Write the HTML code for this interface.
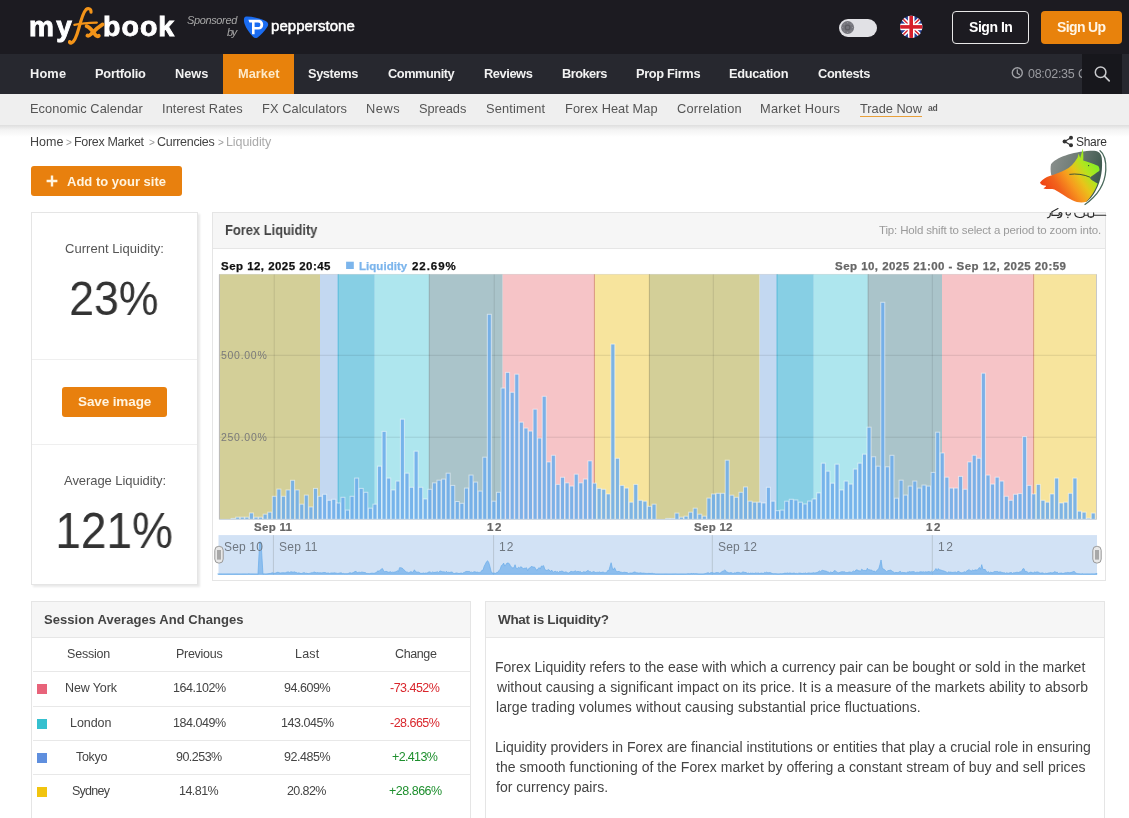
<!DOCTYPE html>
<html><head><meta charset="utf-8"><title>Forex Liquidity</title>
<style>
html,body{margin:0;padding:0;background:#fff;}
body{width:1129px;height:818px;overflow:hidden;position:relative;font-family:"Liberation Sans",sans-serif;}
body>div,.t{position:absolute;}
.t{white-space:nowrap;line-height:1;will-change:transform;}
svg{position:absolute;left:0;top:0;}
</style></head><body>
<div style="left:0px;top:0px;width:1129px;height:54px;background:#1c1b21"></div>
<div style="left:0px;top:54px;width:1129px;height:40px;background:#27282f"></div>
<div style="left:223px;top:54px;width:71px;height:40px;background:#e8820c"></div>
<div style="left:1082px;top:54px;width:40px;height:40px;background:#17171c"></div>
<div style="left:0px;top:94px;width:1129px;height:31px;background:#efefef"></div>
<div style="left:0px;top:125px;width:1129px;height:12px;background:linear-gradient(#dedede,#f3f3f3 40%,#fff)"></div>
<div style="left:952.4px;top:10.8px;width:76.2px;height:32.9px;border:1.5px solid #e8e8e8;border-radius:4px;box-sizing:border-box"></div>
<div style="left:1041px;top:10.8px;width:81px;height:32.9px;background:#e8820c;border-radius:4px"></div>
<div style="left:838.8px;top:18.8px;width:38.3px;height:18.3px;background:#e1e1e5;border-radius:9.2px"></div>
<div style="left:860.2px;top:115.6px;width:61.7px;height:1.5px;background:#e9a03a"></div>
<div style="left:31px;top:166.1px;width:151px;height:30.2px;background:#e8800e;border-radius:3px"></div>
<div style="left:31px;top:212px;width:167px;height:373px;background:#fff;border:1px solid #e5e5e5;box-shadow:2px 2px 2px rgba(0,0,0,0.09);box-sizing:border-box"></div>
<div style="left:32px;top:359px;width:165px;height:1px;background:#efefef"></div>
<div style="left:32px;top:444px;width:165px;height:1px;background:#efefef"></div>
<div style="left:62.3px;top:387.2px;width:104.8px;height:29.6px;background:#e8800e;border-radius:3px"></div>
<div style="left:212px;top:212.2px;width:893.6px;height:368.5px;background:#fff;border:1px solid #e5e5e5;box-sizing:border-box"></div>
<div style="left:213px;top:213.2px;width:891.6px;height:35.6px;background:#f6f6f6;border-bottom:1px solid #e6e6e6;box-sizing:border-box"></div>
<div style="left:31px;top:601px;width:440px;height:230px;background:#fff;border:1px solid #e5e5e5;box-sizing:border-box"></div>
<div style="left:32px;top:602px;width:438px;height:36px;background:#f6f6f6;border-bottom:1px solid #e6e6e6;box-sizing:border-box"></div>
<div style="left:32.7px;top:670.9px;width:437px;height:1px;background:#e8e8e8"></div>
<div style="left:32.7px;top:706px;width:437px;height:1px;background:#e8e8e8"></div>
<div style="left:32.7px;top:739.8px;width:437px;height:1px;background:#e8e8e8"></div>
<div style="left:32.7px;top:773.9px;width:437px;height:1px;background:#e8e8e8"></div>
<div style="left:36.8px;top:684px;width:10px;height:9.8px;background:#e8637a"></div>
<div style="left:36.8px;top:718.9px;width:10px;height:9.8px;background:#35c0cf"></div>
<div style="left:36.8px;top:752.9px;width:10px;height:9.8px;background:#5f8fde"></div>
<div style="left:36.8px;top:786.9px;width:10px;height:9.8px;background:#f1c40f"></div>
<div style="left:485.4px;top:601px;width:620px;height:230px;background:#fff;border:1px solid #e5e5e5;box-sizing:border-box"></div>
<div style="left:486.4px;top:602px;width:618px;height:36px;background:#f6f6f6;border-bottom:1px solid #e6e6e6;box-sizing:border-box"></div>
<svg width="1129" height="818" viewBox="0 0 1129 818" style="font-family:'Liberation Sans',sans-serif">
<rect x="219.4" y="274.4" width="100.6" height="245" fill="#d3cf98"/>
<rect x="320" y="274.4" width="18.2" height="245" fill="#c3d8f1"/>
<rect x="338.2" y="274.4" width="36.6" height="245" fill="#87cfe4"/>
<rect x="374.8" y="274.4" width="54.5" height="245" fill="#aee6ee"/>
<rect x="429.3" y="274.4" width="73.4" height="245" fill="#aac4ca"/>
<rect x="502.7" y="274.4" width="91.7" height="245" fill="#f6c4c7"/>
<rect x="594.4" y="274.4" width="55" height="245" fill="#f7e49d"/>
<rect x="649.4" y="274.4" width="110.2" height="245" fill="#d3cf98"/>
<rect x="759.6" y="274.4" width="17.5" height="245" fill="#c3d8f1"/>
<rect x="777.1" y="274.4" width="36.7" height="245" fill="#87cfe4"/>
<rect x="813.8" y="274.4" width="54.4" height="245" fill="#aee6ee"/>
<rect x="868.2" y="274.4" width="73.8" height="245" fill="#aac4ca"/>
<rect x="942" y="274.4" width="91.6" height="245" fill="#f6c4c7"/>
<rect x="1033.6" y="274.4" width="62.9" height="245" fill="#f7e49d"/>
<rect x="337.7" y="274.4" width="1" height="245" fill="#52b9d9"/>
<rect x="428.8" y="274.4" width="1" height="245" fill="#8fa9ad"/>
<rect x="593.9" y="274.4" width="1" height="245" fill="#d9967f"/>
<rect x="648.9" y="274.4" width="1" height="245" fill="#b8b07a"/>
<rect x="776.6" y="274.4" width="1" height="245" fill="#52b9d9"/>
<rect x="867.7" y="274.4" width="1" height="245" fill="#8fa9ad"/>
<rect x="1033.1" y="274.4" width="1" height="245" fill="#d9967f"/>
<rect x="219.4" y="354.8" width="877.1" height="1" fill="rgba(0,0,0,0.1)"/>
<rect x="219.4" y="436.7" width="877.1" height="1" fill="rgba(0,0,0,0.1)"/>
<rect x="273.7" y="274.4" width="1" height="245" fill="rgba(0,0,0,0.1)"/>
<rect x="493.7" y="274.4" width="1" height="245" fill="rgba(0,0,0,0.1)"/>
<rect x="712.8" y="274.4" width="1" height="245" fill="rgba(0,0,0,0.1)"/>
<rect x="931.8" y="274.4" width="1" height="245" fill="rgba(0,0,0,0.1)"/>
<rect x="218.9" y="274.4" width="1" height="245" fill="#b8b8b8"/>
<rect x="1096" y="274.4" width="1" height="245" fill="#c8c8c8"/>
<rect x="219.4" y="273.9" width="877.1" height="1" fill="rgba(0,0,0,0.08)"/>
<g fill="#70aeea" fill-opacity="0.9" stroke="#fff" stroke-opacity="0.55" stroke-width="1">
<rect x="231.14" y="518.4" width="3.98" height="1"/>
<rect x="235.71" y="517.2" width="3.98" height="2.2"/>
<rect x="240.29" y="517.2" width="3.98" height="2.2"/>
<rect x="244.86" y="517.2" width="3.98" height="2.2"/>
<rect x="249.44" y="513" width="3.98" height="6.4"/>
<rect x="254.01" y="517.2" width="3.98" height="2.2"/>
<rect x="258.59" y="517.2" width="3.98" height="2.2"/>
<rect x="263.16" y="514.2" width="3.98" height="5.2"/>
<rect x="267.74" y="512.2" width="3.98" height="7.2"/>
<rect x="272.31" y="496.3" width="3.98" height="23.1"/>
<rect x="276.89" y="489.1" width="3.98" height="30.3"/>
<rect x="281.46" y="496.3" width="3.98" height="23.1"/>
<rect x="286.04" y="490" width="3.98" height="29.4"/>
<rect x="290.61" y="480.3" width="3.98" height="39.1"/>
<rect x="295.19" y="490" width="3.98" height="29.4"/>
<rect x="299.76" y="504.2" width="3.98" height="15.2"/>
<rect x="304.34" y="495.1" width="3.98" height="24.3"/>
<rect x="308.91" y="507" width="3.98" height="12.4"/>
<rect x="313.49" y="488.4" width="3.98" height="31"/>
<rect x="318.06" y="496.3" width="3.98" height="23.1"/>
<rect x="322.64" y="494.3" width="3.98" height="25.1"/>
<rect x="327.21" y="500.3" width="3.98" height="19.1"/>
<rect x="331.79" y="499.3" width="3.98" height="20.1"/>
<rect x="336.36" y="503" width="3.98" height="16.4"/>
<rect x="340.94" y="497.3" width="3.98" height="22.1"/>
<rect x="345.51" y="510.1" width="3.98" height="9.3"/>
<rect x="350.09" y="496.3" width="3.98" height="23.1"/>
<rect x="354.66" y="478.1" width="3.98" height="41.3"/>
<rect x="359.24" y="488.4" width="3.98" height="31"/>
<rect x="363.81" y="492.3" width="3.98" height="27.1"/>
<rect x="368.39" y="508.2" width="3.98" height="11.2"/>
<rect x="372.96" y="504.2" width="3.98" height="15.2"/>
<rect x="377.54" y="466.2" width="3.98" height="53.2"/>
<rect x="382.11" y="431.4" width="3.98" height="88"/>
<rect x="386.69" y="478.1" width="3.98" height="41.3"/>
<rect x="391.26" y="490" width="3.98" height="29.4"/>
<rect x="395.84" y="481.1" width="3.98" height="38.3"/>
<rect x="400.41" y="419.2" width="3.98" height="100.2"/>
<rect x="404.99" y="473.2" width="3.98" height="46.2"/>
<rect x="409.56" y="487.3" width="3.98" height="32.1"/>
<rect x="414.14" y="451.2" width="3.98" height="68.2"/>
<rect x="418.71" y="487.3" width="3.98" height="32.1"/>
<rect x="423.29" y="499" width="3.98" height="20.4"/>
<rect x="427.86" y="489.3" width="3.98" height="30.1"/>
<rect x="432.44" y="482.9" width="3.98" height="36.5"/>
<rect x="437.01" y="480.2" width="3.98" height="39.2"/>
<rect x="441.59" y="479.1" width="3.98" height="40.3"/>
<rect x="446.16" y="473.2" width="3.98" height="46.2"/>
<rect x="450.74" y="485.4" width="3.98" height="34"/>
<rect x="455.31" y="501.5" width="3.98" height="17.9"/>
<rect x="459.89" y="503.3" width="3.98" height="16.1"/>
<rect x="464.46" y="488.1" width="3.98" height="31.3"/>
<rect x="469.04" y="475.1" width="3.98" height="44.3"/>
<rect x="473.61" y="482.1" width="3.98" height="37.3"/>
<rect x="478.19" y="491.1" width="3.98" height="28.3"/>
<rect x="482.76" y="457.2" width="3.98" height="62.2"/>
<rect x="487.34" y="314.3" width="3.98" height="205.1"/>
<rect x="491.91" y="501.2" width="3.98" height="18.2"/>
<rect x="496.49" y="492.3" width="3.98" height="27.1"/>
<rect x="501.06" y="388.1" width="3.98" height="131.3"/>
<rect x="505.64" y="372.4" width="3.98" height="147"/>
<rect x="510.21" y="392.3" width="3.98" height="127.1"/>
<rect x="514.79" y="374.2" width="3.98" height="145.2"/>
<rect x="519.36" y="422.2" width="3.98" height="97.2"/>
<rect x="523.94" y="428.1" width="3.98" height="91.3"/>
<rect x="528.51" y="431.1" width="3.98" height="88.3"/>
<rect x="533.09" y="409.2" width="3.98" height="110.2"/>
<rect x="537.66" y="438.1" width="3.98" height="81.3"/>
<rect x="542.24" y="396.3" width="3.98" height="123.1"/>
<rect x="546.81" y="462" width="3.98" height="57.4"/>
<rect x="551.39" y="455.3" width="3.98" height="64.1"/>
<rect x="555.96" y="484.4" width="3.98" height="35"/>
<rect x="560.54" y="477.3" width="3.98" height="42.1"/>
<rect x="565.11" y="482.9" width="3.98" height="36.5"/>
<rect x="569.69" y="486.1" width="3.98" height="33.3"/>
<rect x="574.26" y="474.2" width="3.98" height="45.2"/>
<rect x="578.84" y="482.9" width="3.98" height="36.5"/>
<rect x="583.41" y="479.1" width="3.98" height="40.3"/>
<rect x="587.99" y="460.9" width="3.98" height="58.5"/>
<rect x="592.56" y="483.2" width="3.98" height="36.2"/>
<rect x="597.14" y="488.4" width="3.98" height="31"/>
<rect x="601.71" y="489.3" width="3.98" height="30.1"/>
<rect x="606.29" y="494" width="3.98" height="25.4"/>
<rect x="610.86" y="344.1" width="3.98" height="175.3"/>
<rect x="615.44" y="458.3" width="3.98" height="61.1"/>
<rect x="620.01" y="485.4" width="3.98" height="34"/>
<rect x="624.59" y="488.1" width="3.98" height="31.3"/>
<rect x="629.16" y="502.2" width="3.98" height="17.2"/>
<rect x="633.74" y="484.4" width="3.98" height="35"/>
<rect x="638.31" y="500.3" width="3.98" height="19.1"/>
<rect x="642.89" y="501.2" width="3.98" height="18.2"/>
<rect x="647.46" y="506.3" width="3.98" height="13.1"/>
<rect x="652.04" y="504.2" width="3.98" height="15.2"/>
<rect x="665.76" y="518.4" width="3.98" height="1"/>
<rect x="670.34" y="518.4" width="3.98" height="1"/>
<rect x="674.91" y="513.1" width="3.98" height="6.3"/>
<rect x="679.49" y="517.2" width="3.98" height="2.2"/>
<rect x="684.06" y="516.2" width="3.98" height="3.2"/>
<rect x="688.64" y="512.2" width="3.98" height="7.2"/>
<rect x="693.21" y="508.2" width="3.98" height="11.2"/>
<rect x="697.79" y="514.2" width="3.98" height="5.2"/>
<rect x="702.36" y="516.2" width="3.98" height="3.2"/>
<rect x="706.94" y="498.1" width="3.98" height="21.3"/>
<rect x="711.51" y="494" width="3.98" height="25.4"/>
<rect x="716.09" y="493.3" width="3.98" height="26.1"/>
<rect x="720.66" y="493.3" width="3.98" height="26.1"/>
<rect x="725.24" y="460.2" width="3.98" height="59.2"/>
<rect x="729.81" y="495.2" width="3.98" height="24.2"/>
<rect x="734.39" y="497.3" width="3.98" height="22.1"/>
<rect x="738.96" y="492.3" width="3.98" height="27.1"/>
<rect x="743.54" y="487" width="3.98" height="32.4"/>
<rect x="748.11" y="501.2" width="3.98" height="18.2"/>
<rect x="752.69" y="502.2" width="3.98" height="17.2"/>
<rect x="757.26" y="502.2" width="3.98" height="17.2"/>
<rect x="761.84" y="503" width="3.98" height="16.4"/>
<rect x="766.41" y="487.3" width="3.98" height="32.1"/>
<rect x="770.99" y="501.2" width="3.98" height="18.2"/>
<rect x="775.56" y="510.7" width="3.98" height="8.7"/>
<rect x="780.14" y="510.1" width="3.98" height="9.3"/>
<rect x="784.71" y="501.2" width="3.98" height="18.2"/>
<rect x="789.29" y="499.3" width="3.98" height="20.1"/>
<rect x="793.86" y="500" width="3.98" height="19.4"/>
<rect x="798.44" y="502.2" width="3.98" height="17.2"/>
<rect x="803.01" y="504" width="3.98" height="15.4"/>
<rect x="807.59" y="501.1" width="3.98" height="18.3"/>
<rect x="812.16" y="499" width="3.98" height="20.4"/>
<rect x="816.74" y="493" width="3.98" height="26.4"/>
<rect x="821.31" y="463.2" width="3.98" height="56.2"/>
<rect x="825.89" y="471.2" width="3.98" height="48.2"/>
<rect x="830.46" y="483.2" width="3.98" height="36.2"/>
<rect x="835.04" y="464.2" width="3.98" height="55.2"/>
<rect x="839.61" y="490" width="3.98" height="29.4"/>
<rect x="844.19" y="481.1" width="3.98" height="38.3"/>
<rect x="848.76" y="484.1" width="3.98" height="35.3"/>
<rect x="853.34" y="469.1" width="3.98" height="50.3"/>
<rect x="857.91" y="463.2" width="3.98" height="56.2"/>
<rect x="862.49" y="454.2" width="3.98" height="65.2"/>
<rect x="867.06" y="427.2" width="3.98" height="92.2"/>
<rect x="871.64" y="456.8" width="3.98" height="62.6"/>
<rect x="876.21" y="466.2" width="3.98" height="53.2"/>
<rect x="880.79" y="302.3" width="3.98" height="217.1"/>
<rect x="885.36" y="466.8" width="3.98" height="52.6"/>
<rect x="889.94" y="455.3" width="3.98" height="64.1"/>
<rect x="894.51" y="498.2" width="3.98" height="21.2"/>
<rect x="899.09" y="480.2" width="3.98" height="39.2"/>
<rect x="903.66" y="495.1" width="3.98" height="24.3"/>
<rect x="908.24" y="486.1" width="3.98" height="33.3"/>
<rect x="912.81" y="481.1" width="3.98" height="38.3"/>
<rect x="917.39" y="488.1" width="3.98" height="31.3"/>
<rect x="921.96" y="485.1" width="3.98" height="34.3"/>
<rect x="926.54" y="486.1" width="3.98" height="33.3"/>
<rect x="931.11" y="472.4" width="3.98" height="47"/>
<rect x="935.69" y="432.2" width="3.98" height="87.2"/>
<rect x="940.26" y="453" width="3.98" height="66.4"/>
<rect x="944.84" y="477.2" width="3.98" height="42.2"/>
<rect x="949.41" y="488.1" width="3.98" height="31.3"/>
<rect x="953.99" y="488.1" width="3.98" height="31.3"/>
<rect x="958.56" y="476.4" width="3.98" height="43"/>
<rect x="963.14" y="489.3" width="3.98" height="30.1"/>
<rect x="967.71" y="462" width="3.98" height="57.4"/>
<rect x="972.29" y="455.3" width="3.98" height="64.1"/>
<rect x="976.86" y="458.3" width="3.98" height="61.1"/>
<rect x="981.44" y="373.2" width="3.98" height="146.2"/>
<rect x="986.01" y="475.1" width="3.98" height="44.3"/>
<rect x="990.59" y="484.1" width="3.98" height="35.3"/>
<rect x="995.16" y="477.2" width="3.98" height="42.2"/>
<rect x="999.74" y="481.1" width="3.98" height="38.3"/>
<rect x="1004.31" y="496.3" width="3.98" height="23.1"/>
<rect x="1008.89" y="500.3" width="3.98" height="19.1"/>
<rect x="1013.46" y="494.3" width="3.98" height="25.1"/>
<rect x="1018.04" y="493.6" width="3.98" height="25.8"/>
<rect x="1022.61" y="436.6" width="3.98" height="82.8"/>
<rect x="1027.19" y="485.4" width="3.98" height="34"/>
<rect x="1031.76" y="494" width="3.98" height="25.4"/>
<rect x="1036.34" y="484.4" width="3.98" height="35"/>
<rect x="1040.91" y="500.3" width="3.98" height="19.1"/>
<rect x="1045.49" y="502.2" width="3.98" height="17.2"/>
<rect x="1050.06" y="494" width="3.98" height="25.4"/>
<rect x="1054.64" y="478.1" width="3.98" height="41.3"/>
<rect x="1059.21" y="503" width="3.98" height="16.4"/>
<rect x="1063.79" y="502.2" width="3.98" height="17.2"/>
<rect x="1068.36" y="493.3" width="3.98" height="26.1"/>
<rect x="1072.94" y="478.1" width="3.98" height="41.3"/>
<rect x="1077.51" y="511.2" width="3.98" height="8.2"/>
<rect x="1082.09" y="512.2" width="3.98" height="7.2"/>
<rect x="1086.66" y="518.2" width="3.98" height="1.2"/>
<rect x="1091.24" y="513.1" width="3.98" height="6.3"/>
</g>
<rect x="219.4" y="518.9" width="877.1" height="1" fill="#c8d4e0"/>
<rect x="346.1" y="261.7" width="7.7" height="7.3" fill="#7cb5ec"/>
<rect x="218.5" y="535.1" width="878.5" height="39.7" fill="#d2e2f5"/>
<rect x="272.9" y="535.1" width="1" height="39.7" fill="#b9c6d3"/>
<rect x="493.1" y="535.1" width="1" height="39.7" fill="#b9c6d3"/>
<rect x="711.8" y="535.1" width="1" height="39.7" fill="#b9c6d3"/>
<rect x="931.8" y="535.1" width="1" height="39.7" fill="#b9c6d3"/>
<path d="M218.5 574.3 L217.68 574 L218.83 574 L219.97 574 L221.12 574 L222.26 574 L223.4 574 L224.55 574 L225.69 574 L226.83 574 L227.98 574 L229.12 574 L230.27 574 L231.41 574 L232.55 574 L233.7 574 L234.84 574 L235.98 574 L237.13 574 L238.27 574 L239.42 574 L240.56 574 L241.7 574 L242.85 574 L243.99 574 L245.13 574 L246.28 574 L247.42 574 L248.57 573.86 L249.71 573.88 L250.85 574 L252 573.97 L253.14 574 L254.28 574 L255.43 574 L256.57 574 L257.72 574 L257.97 574.3 L259.68 541.8 L261.07 542.3 L262.97 574.3 L263.43 573.96 L264.58 573.88 L265.72 574 L266.87 573.88 L268.01 573.82 L269.15 573.56 L270.3 573.49 L271.44 573.12 L272.58 572.78 L273.73 573.32 L274.87 573.26 L276.02 572.99 L277.16 572.3 L278.3 572.37 L279.45 572.8 L280.59 573.03 L281.73 572.78 L282.88 572.74 L284.02 572.8 L285.17 572.9 L286.31 572.36 L287.45 571.98 L288.6 571.95 L289.74 572.56 L290.88 571.72 L292.03 572 L293.17 572.23 L294.32 571.86 L295.46 572.36 L296.6 572.49 L297.75 573.19 L298.89 572.77 L300.03 573.3 L301.18 573.57 L302.32 573.2 L303.47 572.73 L304.61 572.7 L305.75 573.38 L306.9 573.22 L308.04 573.71 L309.18 573.48 L310.33 573.15 L311.47 572.75 L312.62 572.65 L313.76 572.25 L314.9 572.07 L316.05 572.93 L317.19 572.58 L318.33 572.78 L319.48 572.8 L320.62 572.78 L321.77 572.89 L322.91 572.64 L324.05 572.53 L325.2 572.53 L326.34 573.1 L327.48 573.04 L328.63 573 L329.77 573.53 L330.92 572.94 L332.06 572.97 L333.2 573.03 L334.35 572.8 L335.49 573.01 L336.63 573.22 L337.78 573.42 L338.92 573.26 L340.07 572.91 L341.21 572.84 L342.35 573.59 L343.5 573.4 L344.64 573.75 L345.78 573.69 L346.93 573.77 L348.07 573.67 L349.22 572.89 L350.36 572.78 L351.5 573.13 L352.65 572.76 L353.79 572.3 L354.93 571.57 L356.08 571.34 L357.22 572.85 L358.37 572.38 L359.51 572.25 L360.65 572.45 L361.8 572.06 L362.94 572.22 L364.08 572.51 L365.23 572.54 L366.37 573.36 L367.52 573.46 L368.66 573.56 L369.8 573.65 L370.95 573.28 L372.09 573.16 L373.23 573.3 L374.38 573.23 L375.52 572.78 L376.67 572.25 L377.81 570.79 L378.95 571.39 L380.1 570.16 L381.24 569.26 L382.38 568.49 L383.53 570.6 L384.67 571.94 L385.82 571.35 L386.96 571.57 L388.1 572.25 L389.25 572.09 L390.39 571.7 L391.53 572.36 L392.68 572.14 L393.82 572.27 L394.97 571.96 L396.11 571.77 L397.25 570.67 L398.4 571.61 L399.54 567.7 L400.68 567.69 L401.83 568.03 L402.97 568.69 L404.12 569.93 L405.26 571.25 L406.4 571.98 L407.55 572.16 L408.69 572.84 L409.83 572.18 L410.98 571.6 L412.12 572.34 L413.27 571.97 L414.41 569.8 L415.55 571.58 L416.7 572.1 L417.84 572.16 L418.98 572.18 L420.13 573.17 L421.27 573.35 L422.42 573.29 L423.56 572.95 L424.7 573.36 L425.85 572.96 L426.99 573.26 L428.13 572.31 L429.28 571.87 L430.42 572.15 L431.57 572.79 L432.71 571.89 L433.85 572.52 L435 572.32 L436.14 572.25 L437.28 571.71 L438.43 572.64 L439.57 571.3 L440.72 571.01 L441.86 571.64 L443 571.88 L444.15 571.76 L445.29 572.5 L446.43 571.25 L447.58 572.53 L448.72 572.21 L449.87 572.5 L451.01 572.06 L452.15 572.06 L453.3 573.16 L454.44 573.48 L455.58 573.12 L456.73 572.9 L457.87 573.27 L459.02 573.59 L460.16 573.24 L461.3 573.08 L462.45 573.41 L463.59 572.63 L464.73 572.23 L465.88 571.48 L467.02 571.42 L468.17 571.49 L469.31 571.38 L470.45 572.24 L471.6 572.13 L472.74 572.58 L473.88 571.84 L475.03 571.78 L476.17 572.3 L477.32 572.09 L478.46 572.43 L479.6 572.4 L480.75 572.19 L481.89 570.34 L483.03 570.19 L484.18 566.29 L485.32 564.18 L486.47 561.84 L487.61 560.76 L488.75 562.56 L489.9 566.43 L491.04 571.26 L492.18 573.1 L493.33 573.07 L494.47 573.11 L495.62 573.36 L496.76 572.51 L497.9 572.3 L499.05 570.4 L500.19 569.22 L501.33 565.63 L502.48 565.06 L503.62 563.1 L504.77 566.15 L505.91 564.6 L507.05 563 L508.2 563.07 L509.34 563.68 L510.48 565.91 L511.63 567.3 L512.77 567.97 L513.92 567.72 L515.06 564.72 L516.2 568.25 L517.35 568.76 L518.49 567.19 L519.63 567.88 L520.78 566.84 L521.92 567.22 L523.07 568.88 L524.21 568.27 L525.35 568.28 L526.5 567.72 L527.64 570.72 L528.78 568.47 L529.93 568.03 L531.07 566.53 L532.22 566.71 L533.36 567.03 L534.5 566.99 L535.65 568.71 L536.79 570.36 L537.93 568.93 L539.08 567.62 L540.22 569.02 L541.37 566.04 L542.51 566.18 L543.65 565.64 L544.8 569.37 L545.94 570.25 L547.08 570.51 L548.23 569.57 L549.37 570.06 L550.52 571.54 L551.66 570.07 L552.8 571.9 L553.95 572.16 L555.09 571 L556.23 571.99 L557.38 571.59 L558.52 572.64 L559.67 571.3 L560.81 571.52 L561.95 570.98 L563.1 571.68 L564.24 572.31 L565.38 571.89 L566.53 572.1 L567.67 572.82 L568.82 573.04 L569.96 572.1 L571.1 571.36 L572.25 571.7 L573.39 571.74 L574.53 571.32 L575.68 570.88 L576.82 572 L577.97 571.34 L579.11 571.89 L580.25 571.51 L581.4 572.53 L582.54 572.41 L583.68 571.64 L584.83 572.06 L585.97 571.96 L587.12 570.88 L588.26 570.44 L589.4 571.74 L590.55 571.66 L591.69 572.53 L592.83 571.91 L593.98 571.57 L595.12 572.53 L596.27 572.44 L597.41 572.25 L598.55 572.35 L599.7 571.91 L600.84 572.61 L601.98 572.31 L603.13 572.02 L604.27 572.65 L605.42 572.68 L606.56 572.62 L607.7 570.5 L608.85 570.57 L609.99 566.49 L611.13 562.73 L612.28 567.73 L613.42 569.99 L614.57 567.74 L615.71 570.27 L616.85 571.9 L618 571.53 L619.14 571.45 L620.28 572.06 L621.43 572.23 L622.57 572.62 L623.72 572.37 L624.86 572.23 L626 572.58 L627.15 572.54 L628.29 573.45 L629.43 573.16 L630.58 572.95 L631.72 573.05 L632.87 572.8 L634.01 571.99 L635.15 572.07 L636.3 572.68 L637.44 572.86 L638.58 573.04 L639.73 572.95 L640.87 572.84 L642.02 573.25 L643.16 573.1 L644.3 573.21 L645.45 573.37 L646.59 573.44 L647.73 573.44 L648.88 573.37 L650.02 573.49 L651.17 573.41 L652.31 573.3 L653.45 573.63 L654.6 573.69 L655.74 574 L656.88 574 L658.03 574 L659.17 574 L660.32 574 L661.46 574 L662.6 574 L663.75 574 L664.89 574 L666.03 574 L667.18 574 L668.32 574 L669.47 574 L670.61 574 L671.75 574 L672.9 574 L674.04 574 L675.18 573.88 L676.33 573.95 L677.47 573.99 L678.62 574 L679.76 574 L680.9 574 L682.05 574 L683.19 574 L684.33 574 L685.48 574 L686.62 573.9 L687.77 573.8 L688.91 573.82 L690.05 573.92 L691.2 573.56 L692.34 573.74 L693.48 573.56 L694.63 573.73 L695.77 573.63 L696.92 573.8 L698.06 573.96 L699.2 574 L700.35 574 L701.49 574 L702.63 574 L703.78 573.9 L704.92 573.74 L706.07 573.44 L707.21 572.89 L708.35 572.74 L709.5 573.43 L710.64 572.79 L711.78 572.62 L712.93 572.85 L714.07 573.34 L715.22 572.96 L716.36 572.58 L717.5 572.6 L718.65 572.73 L719.79 573.28 L720.93 572.58 L722.08 571.49 L723.22 571.2 L724.37 570.17 L725.51 570.39 L726.65 572.22 L727.8 572.27 L728.94 573.04 L730.08 572.7 L731.23 572.59 L732.37 573.17 L733.52 573.34 L734.66 572.84 L735.8 573 L736.95 572.37 L738.09 572.38 L739.23 572.51 L740.38 572.93 L741.52 573.01 L742.67 571.85 L743.81 572.16 L744.95 572.49 L746.1 572.56 L747.24 573.42 L748.38 573.1 L749.53 573.6 L750.67 573.09 L751.82 573.32 L752.96 573.16 L754.1 573.62 L755.25 572.93 L756.39 573.17 L757.53 573.16 L758.68 573.05 L759.82 573.63 L760.97 573.04 L762.11 573.22 L763.25 573.5 L764.4 572.45 L765.54 572.69 L766.68 572.18 L767.83 572.81 L768.97 572.74 L770.12 572.59 L771.26 573.1 L772.4 573.53 L773.55 573.73 L774.69 573.63 L775.83 573.73 L776.98 573.88 L778.12 573.93 L779.27 573.9 L780.41 573.69 L781.55 573.85 L782.7 573.67 L783.84 573.49 L784.98 573.1 L786.13 573.36 L787.27 572.93 L788.42 573.32 L789.56 572.97 L790.7 573.12 L791.85 573.42 L792.99 573.28 L794.13 573.02 L795.28 573.6 L796.42 573.42 L797.57 573.64 L798.71 573.16 L799.85 573.12 L801 573.29 L802.14 573.59 L803.28 573.28 L804.43 573.36 L805.57 572.96 L806.72 573.58 L807.86 573.09 L809 572.9 L810.15 573.21 L811.29 573.12 L812.43 572.95 L813.58 572.66 L814.72 573.03 L815.87 572.81 L817.01 572.56 L818.15 572 L819.3 570.93 L820.44 571.76 L821.58 570.59 L822.73 570.25 L823.87 570.7 L825.02 571 L826.16 571.12 L827.3 571.81 L828.45 572.09 L829.59 572.78 L830.73 571.91 L831.88 572.57 L833.02 572.49 L834.17 570.74 L835.31 570.66 L836.45 571.95 L837.6 572.45 L838.74 572.86 L839.88 572.36 L841.03 571.92 L842.17 571.71 L843.32 571.87 L844.46 571.77 L845.6 572.45 L846.75 572.55 L847.89 572.5 L849.03 571.97 L850.18 572.05 L851.32 572.43 L852.47 571.65 L853.61 570.98 L854.75 571.79 L855.9 570 L857.04 569.85 L858.18 570.59 L859.33 570.7 L860.47 571.41 L861.62 569.21 L862.76 570 L863.9 570.66 L865.05 570.15 L866.19 571.19 L867.33 568.21 L868.48 569.73 L869.62 569.79 L870.77 570.13 L871.91 570.17 L873.05 571.55 L874.2 570.85 L875.34 572.27 L876.48 570.79 L877.63 569.73 L878.77 568.83 L879.92 564.66 L881.06 559.97 L882.2 567.57 L883.35 569.26 L884.49 569.58 L885.63 570.83 L886.78 571.69 L887.92 570.6 L889.07 570.58 L890.21 570.07 L891.35 570.51 L892.5 571.46 L893.64 572.09 L894.78 572.9 L895.93 572.32 L897.07 572.66 L898.22 572.52 L899.36 571.71 L900.5 571.4 L901.65 572.93 L902.79 572.35 L903.93 572.7 L905.08 572.55 L906.22 573.2 L907.37 571.97 L908.51 572.1 L909.65 571.62 L910.8 571.96 L911.94 571.7 L913.08 571.77 L914.23 571.6 L915.37 572.81 L916.52 572.3 L917.66 572.23 L918.8 572.39 L919.95 571.84 L921.09 571.83 L922.23 572.04 L923.38 571.76 L924.52 572.16 L925.67 571.7 L926.81 572.1 L927.95 571.81 L929.1 571.56 L930.24 572.26 L931.38 571.2 L932.53 572.15 L933.67 571.45 L934.82 570.21 L935.96 568.54 L937.1 570.93 L938.25 568.55 L939.39 569.85 L940.53 569.92 L941.68 570.36 L942.82 570.76 L943.97 571.03 L945.11 571.51 L946.25 571.97 L947.4 572.96 L948.54 571.81 L949.68 572.23 L950.83 572.08 L951.97 572.44 L953.12 572.39 L954.26 572.23 L955.4 572.02 L956.55 572.84 L957.69 571.48 L958.83 571.46 L959.98 572.39 L961.12 572.85 L962.27 572.68 L963.41 572.31 L964.55 571.72 L965.7 572.3 L966.84 570.74 L967.98 570.51 L969.13 569.49 L970.27 570.71 L971.42 570.93 L972.56 570.07 L973.7 570.6 L974.85 570.05 L975.99 569.86 L977.13 570.27 L978.28 568.96 L979.42 567.46 L980.57 569.32 L981.71 564.65 L982.85 569.1 L984 569.72 L985.14 569.37 L986.28 571.38 L987.43 572.18 L988.57 571.81 L989.72 572.92 L990.86 571.97 L992 572.85 L993.15 572.41 L994.29 571.57 L995.43 571.51 L996.58 571.49 L997.72 571.58 L998.87 572.35 L1000.01 571.77 L1001.15 572.22 L1002.3 572.53 L1003.44 572.74 L1004.58 572.78 L1005.73 573.38 L1006.87 572.66 L1008.02 573.39 L1009.16 573.04 L1010.3 572.62 L1011.45 572.54 L1012.59 573.42 L1013.73 572.64 L1014.88 572.85 L1016.02 572.41 L1017.17 572.22 L1018.31 572.6 L1019.45 572.01 L1020.6 571.65 L1021.74 571.15 L1022.88 568.84 L1024.03 568.65 L1025.17 571.61 L1026.32 571.38 L1027.46 572.06 L1028.6 572.94 L1029.75 572.5 L1030.89 572.09 L1032.03 572.62 L1033.18 573.12 L1034.32 572.06 L1035.47 572.35 L1036.61 571.99 L1037.75 571.9 L1038.9 572.44 L1040.04 573.22 L1041.18 573.04 L1042.33 572.85 L1043.47 573.23 L1044.62 573.64 L1045.76 573.16 L1046.9 573.6 L1048.05 573.04 L1049.19 572.97 L1050.33 572.62 L1051.48 572.82 L1052.62 572.87 L1053.77 572.35 L1054.91 571.57 L1056.05 572.51 L1057.2 572.13 L1058.34 573.48 L1059.48 573.22 L1060.63 573.12 L1061.77 573.04 L1062.92 573.59 L1064.06 573.16 L1065.2 572.76 L1066.35 572.8 L1067.49 572.44 L1068.63 572.58 L1069.78 572.81 L1070.92 572.5 L1072.07 572.26 L1073.21 571.57 L1074.35 571.58 L1075.5 572.73 L1076.64 573.43 L1077.78 573.76 L1078.93 573.85 L1080.07 573.92 L1081.22 574 L1082.36 573.82 L1083.5 574 L1084.65 573.99 L1085.79 574 L1086.93 574 L1088.08 574 L1089.22 574 L1090.37 574 L1091.51 573.88 L1092.65 573.92 L1093.8 574 L1094.94 573.96 L1097 573.5 L1097 574.3 Z" fill="#7cb5ec" fill-opacity="0.8" stroke="#68acea" stroke-width="0.7"/>
<rect x="214.8" y="546.3" width="8.4" height="16.8" rx="4" fill="#e8e8e8" stroke="#999" stroke-width="1"/>
<rect x="217" y="550" width="4" height="9.6" fill="#a8a8a8"/>
<rect x="1092.8" y="546.3" width="8.4" height="16.8" rx="4" fill="#e8e8e8" stroke="#999" stroke-width="1"/>
<rect x="1095" y="550" width="4" height="9.6" fill="#a8a8a8"/>
</svg>
<span class="t" style="left:29.06px;top:13px;font-size:28px;color:#fff;font-weight:bold;letter-spacing:2.24px;-webkit-text-stroke:0.9px #fff;">my</span>
<span class="t" style="left:102.93px;top:12px;font-size:28.5px;color:#fff;font-weight:bold;letter-spacing:1.03px;-webkit-text-stroke:0.9px #fff;">book</span>
<span class="t" style="left:187.09px;top:15px;font-size:11px;color:#a6a6a6;font-style:italic;letter-spacing:-0.37px;">Sponsored</span>
<span class="t" style="left:227.15px;top:27px;font-size:11px;color:#a6a6a6;font-style:italic;letter-spacing:-1.31px;">by</span>
<span class="t" style="left:271.04px;top:18px;font-size:15px;color:#fff;letter-spacing:0.04px;-webkit-text-stroke:0.5px #fff;">pepperstone</span>
<span class="t" style="left:969.18px;top:20px;font-size:14px;color:#fff;font-weight:bold;letter-spacing:-0.46px;">Sign In</span>
<span class="t" style="left:1056.78px;top:20px;font-size:14px;color:#fff5e6;font-weight:bold;letter-spacing:-0.62px;">Sign Up</span>
<span class="t" style="left:29.84px;top:68px;font-size:12.8px;color:#f2f2f2;font-weight:bold;letter-spacing:0.15px;">Home</span>
<span class="t" style="left:94.84px;top:68px;font-size:12.8px;color:#f2f2f2;font-weight:bold;letter-spacing:-0.21px;">Portfolio</span>
<span class="t" style="left:175.14px;top:68px;font-size:12.8px;color:#f2f2f2;font-weight:bold;letter-spacing:-0.02px;">News</span>
<span class="t" style="left:237.54px;top:68px;font-size:12.8px;color:#fde9c9;font-weight:bold;letter-spacing:0.03px;">Market</span>
<span class="t" style="left:308.22px;top:68px;font-size:12.8px;color:#f2f2f2;font-weight:bold;letter-spacing:-0.39px;">Systems</span>
<span class="t" style="left:388.38px;top:68px;font-size:12.8px;color:#f2f2f2;font-weight:bold;letter-spacing:-0.46px;">Community</span>
<span class="t" style="left:484.04px;top:68px;font-size:12.8px;color:#f2f2f2;font-weight:bold;letter-spacing:-0.41px;">Reviews</span>
<span class="t" style="left:561.94px;top:68px;font-size:12.8px;color:#f2f2f2;font-weight:bold;letter-spacing:-0.52px;">Brokers</span>
<span class="t" style="left:636.04px;top:68px;font-size:12.8px;color:#f2f2f2;font-weight:bold;letter-spacing:-0.34px;">Prop Firms</span>
<span class="t" style="left:729.14px;top:68px;font-size:12.8px;color:#f2f2f2;font-weight:bold;letter-spacing:-0.3px;">Education</span>
<span class="t" style="left:817.68px;top:68px;font-size:12.8px;color:#f2f2f2;font-weight:bold;letter-spacing:-0.35px;">Contests</span>
<span class="t" style="left:1028.11px;top:68px;font-size:12.5px;color:#9a9ba0;letter-spacing:-0.28px;">08:02:35</span>
<span class="t" style="left:1077.58px;top:68px;font-size:12.5px;color:#9a9ba0;width:3.6px;overflow:hidden;display:block;">G</span>
<span class="t" style="left:29.76px;top:103px;font-size:12.8px;color:#555;letter-spacing:0.07px;">Economic Calendar</span>
<span class="t" style="left:161.82px;top:103px;font-size:12.8px;color:#555;letter-spacing:0.07px;">Interest Rates</span>
<span class="t" style="left:261.96px;top:103px;font-size:12.8px;color:#555;letter-spacing:0.08px;">FX Calculators</span>
<span class="t" style="left:366.36px;top:103px;font-size:12.8px;color:#555;letter-spacing:0.53px;">News</span>
<span class="t" style="left:419.12px;top:103px;font-size:12.8px;color:#555;letter-spacing:-0.06px;">Spreads</span>
<span class="t" style="left:486.42px;top:103px;font-size:12.8px;color:#555;letter-spacing:0.19px;">Sentiment</span>
<span class="t" style="left:564.96px;top:103px;font-size:12.8px;color:#555;letter-spacing:0.06px;">Forex Heat Map</span>
<span class="t" style="left:676.96px;top:103px;font-size:12.8px;color:#555;letter-spacing:0.2px;">Correlation</span>
<span class="t" style="left:759.86px;top:103px;font-size:12.8px;color:#555;letter-spacing:0.29px;">Market Hours</span>
<span class="t" style="left:859.92px;top:103px;font-size:12.8px;color:#555;letter-spacing:-0.02px;">Trade Now</span>
<span class="t" style="left:927.75px;top:104px;font-size:8.5px;color:#555;font-weight:bold;letter-spacing:-0.11px;">ad</span>
<span class="t" style="left:29.78px;top:136px;font-size:12.5px;color:#444;letter-spacing:0.01px;">Home</span>
<span class="t" style="left:66.12px;top:138px;font-size:10px;color:#999;letter-spacing:-0.02px;">&gt;</span>
<span class="t" style="left:74.48px;top:136px;font-size:12.5px;color:#444;letter-spacing:-0.33px;">Forex Market</span>
<span class="t" style="left:148.52px;top:138px;font-size:10px;color:#999;letter-spacing:-0.02px;">&gt;</span>
<span class="t" style="left:156.97px;top:136px;font-size:12.5px;color:#444;letter-spacing:-0.3px;">Currencies</span>
<span class="t" style="left:218.12px;top:138px;font-size:10px;color:#999;letter-spacing:-0.02px;">&gt;</span>
<span class="t" style="left:225.98px;top:136px;font-size:12.5px;color:#aaa;letter-spacing:-0.08px;">Liquidity</span>
<span class="t" style="left:67.47px;top:175px;font-size:13px;color:#fff4e0;font-weight:bold;">Add to your site</span>
<span class="t" style="left:1075.86px;top:136px;font-size:12px;color:#333;letter-spacing:-0.29px;">Share</span>
<span class="t" style="left:65.05px;top:242px;font-size:13px;color:#555;letter-spacing:0.04px;">Current Liquidity:</span>
<span class="t" style="left:69.05px;top:274px;font-size:49px;color:#333;transform:scaleX(0.91);transform-origin:2.45px 0;">23%</span>
<span class="t" style="left:77.5px;top:395px;font-size:13.5px;color:#fff4e0;font-weight:bold;letter-spacing:-0.11px;">Save image</span>
<span class="t" style="left:64.08px;top:474px;font-size:13px;color:#555;letter-spacing:-0.06px;">Average Liquidity:</span>
<span class="t" style="left:54.81px;top:506px;font-size:49.5px;color:#333;transform:scaleX(0.93);transform-origin:3.79px 0;">121%</span>
<span class="t" style="left:224.86px;top:223px;font-size:14px;color:#444;font-weight:bold;transform:scaleX(0.92);transform-origin:0.94px 0;">Forex Liquidity</span>
<span class="t" style="left:878.75px;top:225px;font-size:11.5px;color:#9a9a9a;letter-spacing:-0.16px;">Tip: Hold shift to select a period to zoom into.</span>
<span class="t" style="left:220.66px;top:261px;font-size:11.5px;color:#111;font-weight:bold;letter-spacing:0.46px;-webkit-text-stroke:0.25px #111;">Sep 12, 2025 20:45</span>
<span class="t" style="left:359.03px;top:261px;font-size:11.5px;color:#7cb5ec;font-weight:bold;letter-spacing:0.04px;-webkit-text-stroke:0.25px #7cb5ec;">Liquidity</span>
<span class="t" style="left:411.6px;top:261px;font-size:11.5px;color:#111;font-weight:bold;letter-spacing:0.94px;-webkit-text-stroke:0.25px #111;">22.69%</span>
<span class="t" style="left:834.86px;top:261px;font-size:11.5px;color:#666;font-weight:bold;letter-spacing:0.46px;-webkit-text-stroke:0.25px #666;">Sep 10, 2025 21:00 - Sep 12, 2025 20:59</span>
<span class="t" style="left:221.47px;top:350px;font-size:10.5px;color:#7a7a7a;letter-spacing:0.71px;">500.00%</span>
<span class="t" style="left:221.38px;top:432px;font-size:10.5px;color:#7a7a7a;letter-spacing:0.72px;">250.00%</span>
<span class="t" style="left:254.26px;top:522px;font-size:11.5px;color:#666;font-weight:bold;letter-spacing:0.28px;-webkit-text-stroke:0.2px #666;">Sep 11</span>
<span class="t" style="left:487.18px;top:522px;font-size:11.5px;color:#666;font-weight:bold;letter-spacing:1.49px;-webkit-text-stroke:0.2px #666;">12</span>
<span class="t" style="left:693.66px;top:522px;font-size:11.5px;color:#666;font-weight:bold;letter-spacing:0.28px;-webkit-text-stroke:0.2px #666;">Sep 12</span>
<span class="t" style="left:925.78px;top:522px;font-size:11.5px;color:#666;font-weight:bold;letter-spacing:1.49px;-webkit-text-stroke:0.2px #666;">12</span>
<span class="t" style="left:223.66px;top:541px;font-size:12px;color:#6f7780;letter-spacing:0.17px;">Sep 10</span>
<span class="t" style="left:278.86px;top:541px;font-size:12px;color:#6f7780;letter-spacing:0.24px;">Sep 11</span>
<span class="t" style="left:498.68px;top:541px;font-size:12px;color:#6f7780;letter-spacing:1.07px;">12</span>
<span class="t" style="left:717.86px;top:541px;font-size:12px;color:#6f7780;letter-spacing:0.2px;">Sep 12</span>
<span class="t" style="left:937.88px;top:541px;font-size:12px;color:#6f7780;letter-spacing:1.47px;">12</span>
<span class="t" style="left:43.51px;top:613px;font-size:13px;color:#444;font-weight:bold;letter-spacing:0.06px;">Session Averages And Changes</span>
<span class="t" style="left:67.13px;top:648px;font-size:12.5px;color:#444;letter-spacing:-0.2px;">Session</span>
<span class="t" style="left:175.88px;top:648px;font-size:12.5px;color:#444;letter-spacing:-0.28px;">Previous</span>
<span class="t" style="left:294.78px;top:648px;font-size:12.5px;color:#444;letter-spacing:0.23px;">Last</span>
<span class="t" style="left:394.68px;top:648px;font-size:12.5px;color:#444;letter-spacing:-0.38px;">Change</span>
<span class="t" style="left:64.58px;top:682px;font-size:12.5px;color:#444;letter-spacing:-0.12px;">New York</span>
<span class="t" style="left:172.64px;top:682px;font-size:12.5px;color:#444;letter-spacing:-0.44px;">164.102%</span>
<span class="t" style="left:284.21px;top:682px;font-size:12.5px;color:#444;letter-spacing:-0.44px;">94.609%</span>
<span class="t" style="left:390.25px;top:682px;font-size:12.5px;color:#d9262c;letter-spacing:-0.52px;">-73.452%</span>
<span class="t" style="left:69.88px;top:717px;font-size:12.5px;color:#444;letter-spacing:-0.06px;">London</span>
<span class="t" style="left:172.64px;top:717px;font-size:12.5px;color:#444;letter-spacing:-0.44px;">184.049%</span>
<span class="t" style="left:281.04px;top:717px;font-size:12.5px;color:#444;letter-spacing:-0.45px;">143.045%</span>
<span class="t" style="left:390.25px;top:717px;font-size:12.5px;color:#d9262c;letter-spacing:-0.52px;">-28.665%</span>
<span class="t" style="left:75.53px;top:751px;font-size:12.5px;color:#444;letter-spacing:-0.31px;">Tokyo</span>
<span class="t" style="left:176.31px;top:751px;font-size:12.5px;color:#444;letter-spacing:-0.52px;">90.253%</span>
<span class="t" style="left:284.21px;top:751px;font-size:12.5px;color:#444;letter-spacing:-0.44px;">92.485%</span>
<span class="t" style="left:392.19px;top:751px;font-size:12.5px;color:#1e8f2e;letter-spacing:-0.64px;">+2.413%</span>
<span class="t" style="left:71.63px;top:785px;font-size:12.5px;color:#444;letter-spacing:-0.74px;">Sydney</span>
<span class="t" style="left:179.14px;top:785px;font-size:12.5px;color:#444;letter-spacing:-0.54px;">14.81%</span>
<span class="t" style="left:287.48px;top:785px;font-size:12.5px;color:#444;letter-spacing:-0.61px;">20.82%</span>
<span class="t" style="left:388.99px;top:785px;font-size:12.5px;color:#1e8f2e;letter-spacing:-0.5px;">+28.866%</span>
<span class="t" style="left:498.48px;top:613px;font-size:13.5px;color:#444;font-weight:bold;letter-spacing:-0.31px;">What is Liquidity?</span>
<span class="t" style="left:495.46px;top:660px;font-size:14px;color:#444;letter-spacing:-0.02px;">Forex Liquidity refers to the ease with which a currency pair can be bought or sold in the market</span>
<span class="t" style="left:496.62px;top:680px;font-size:14px;color:#444;letter-spacing:0.06px;">without causing a significant impact on its price. It is a measure of the markets ability to absorb</span>
<span class="t" style="left:495.66px;top:700px;font-size:14px;color:#444;letter-spacing:0.1px;">large trading volumes without causing substantial price fluctuations.</span>
<span class="t" style="left:495.46px;top:740px;font-size:14px;color:#444;letter-spacing:0.02px;">Liquidity providers in Forex are financial institutions or entities that play a crucial role in ensuring</span>
<span class="t" style="left:496.38px;top:760px;font-size:14px;color:#444;letter-spacing:0.04px;">the smooth functioning of the Forex market by offering a constant stream of buy and sell prices</span>
<span class="t" style="left:496.4px;top:780px;font-size:14px;color:#444;">for currency pairs.</span>
<svg width="1129" height="818" viewBox="0 0 1129 818" style="pointer-events:none">
<!-- myfxbook f x -->
<g fill="none" stroke="#f39419" stroke-linecap="round">
<path d="M91 12.2 C91.2 9 88.4 7.6 86 9.6 C83.4 12 81 20 78.6 29 C76.6 36.4 74.6 41.8 71.4 43 C70 43.4 69.2 42.6 69.6 41.6" stroke-width="3.2"/>
<path d="M74.4 24.8 C80 23.6 89 22.8 96.8 22.6" stroke-width="2.3"/>
<path d="M86.6 26.2 C89.6 27 92.6 31 95 34.4 C96.2 36 97.6 36.8 98.8 35.8" stroke-width="3.8"/>
<path d="M102.6 24.4 C99 26.6 94.2 30.8 91.2 34 C89.8 35.4 88.4 36.4 87.4 35.6" stroke-width="3.8"/>
</g>
<!-- pepperstone icon -->
<path d="M246.3 16.6 C252 16.4 259.5 18.2 265.6 21 C268.4 22.3 268.8 24.6 267.4 26.8 C264.6 31 260.6 35.4 257.6 37.4 C256 38.4 254.4 38.2 253.2 37 C249.6 33.4 246.2 28.6 244.6 24 C243.4 20.2 243.6 16.8 246.3 16.6 Z" fill="#1a6cf1"/>
<path d="M248.4 19.8 H258.4 C261.6 19.8 263.2 22 263.2 24.8 C263.2 27.8 261.4 29.6 258.4 29.6 H254.6 V34.2 H252 V22.4 H249.4 Z M254.6 22.4 V27 H258 C259.6 27 260.4 26.2 260.4 24.7 C260.4 23.2 259.6 22.4 258 22.4 Z" fill="#fff" fill-rule="evenodd"/>
<!-- toggle knob -->
<circle cx="847.6" cy="27.5" r="6.5" fill="#75757c"/>
<circle cx="847.6" cy="27.5" r="2.3" fill="none" stroke="#5e5e64" stroke-width="1.2"/>
<g fill="#9a9aa0"><circle cx="847.6" cy="22.6" r="0.6"/><circle cx="847.6" cy="32.4" r="0.6"/><circle cx="842.7" cy="27.5" r="0.6"/><circle cx="852.5" cy="27.5" r="0.6"/><circle cx="844.1" cy="24" r="0.6"/><circle cx="851.1" cy="31" r="0.6"/><circle cx="844.1" cy="31" r="0.6"/><circle cx="851.1" cy="24" r="0.6"/></g>
<!-- UK flag -->
<defs><clipPath id="fc"><circle cx="911.2" cy="26.9" r="11.1"/></clipPath></defs>
<g clip-path="url(#fc)">
<rect x="899" y="15" width="25" height="24" fill="#243f94"/>
<path d="M899 15 L924 39 M924 15 L899 39" stroke="#fff" stroke-width="4.2"/>
<path d="M899 15 L911 27 M924 39 L911 27 M924 15 L911 27 M899 39 L911 27" stroke="#d61f2b" stroke-width="1.4"/>
<rect x="899" y="23.6" width="25" height="6.6" fill="#fff"/>
<rect x="907.9" y="15" width="6.6" height="24" fill="#fff"/>
<rect x="899" y="25.1" width="25" height="3.6" fill="#d61f2b"/>
<rect x="909.4" y="15" width="3.6" height="24" fill="#d61f2b"/>
</g>
<!-- clock -->
<circle cx="1017.3" cy="72.8" r="5" fill="none" stroke="#a0a1a6" stroke-width="1.4"/>
<path d="M1017.3 69.8 V73.2 L1019.4 74.6" fill="none" stroke="#a0a1a6" stroke-width="1.3" stroke-linecap="round"/>
<!-- search -->
<circle cx="1100.6" cy="72.2" r="5.3" fill="none" stroke="#c9cacd" stroke-width="1.5"/>
<path d="M1104.5 76.1 L1109.2 80.8" stroke="#c9cacd" stroke-width="1.7" stroke-linecap="round"/>
<!-- share icon -->
<g fill="#333"><circle cx="1071" cy="137.8" r="2"/><circle cx="1064.6" cy="141.4" r="2"/><circle cx="1071" cy="145.2" r="2"/></g>
<path d="M1071 137.8 L1064.6 141.4 L1071 145.2" stroke="#333" stroke-width="1.2" fill="none"/>
<!-- plus in add button -->
<path d="M52 175.6 V186.4 M46.6 181 H57.4" stroke="#fff4e0" stroke-width="2.4"/>
<!-- broker logo -->
<defs>
<linearGradient id="sg" x1="0" y1="0" x2="1" y2="0.3"><stop offset="0" stop-color="#8d918f"/><stop offset="0.5" stop-color="#6f7c76"/><stop offset="1" stop-color="#3f5a4f"/></linearGradient>
<linearGradient id="ag" x1="0" y1="0.75" x2="0.9" y2="0.2"><stop offset="0" stop-color="#ee3812"/><stop offset="0.28" stop-color="#f2641c"/><stop offset="0.48" stop-color="#f79a1e"/><stop offset="0.64" stop-color="#e8c41a"/><stop offset="0.8" stop-color="#b4e41e"/><stop offset="1" stop-color="#84ee24"/></linearGradient>
</defs>
<path d="M1051 164.3 C1056 157.5 1072 152 1090 150.8 C1097 150.4 1100.8 151.6 1101.8 158 C1102.8 168 1101.4 180 1096 190 C1093 196 1089 200.6 1086.3 201.8 L1051.2 175 C1050.4 171 1050.4 167 1051 164.3 Z" fill="url(#sg)"/>
<path d="M1099.6 150.2 C1104.4 154 1106.2 162 1105.8 170 C1105.2 182 1100 194 1084.6 204.8" fill="none" stroke="#4a6a5c" stroke-width="1.3"/>
<path d="M1040 182.6 C1042.6 179.4 1046 177 1049.6 176 C1055 174.4 1060 172.4 1065 170 C1070 167.6 1074 163.6 1077.6 157.4 L1078.6 153.4 L1080.2 158 C1081 155.6 1082 151.6 1082.7 148.6 C1083.4 152 1083.6 157 1083.2 160.6 C1087 162 1093 163.6 1098.3 166.1 C1099.6 168 1099.8 170.4 1099.2 171 C1096 173 1093 175.6 1090.2 177.2 C1089.4 178.8 1092.6 180.6 1097.6 183.6 C1095.4 190 1090.6 197.6 1086.3 201.8 C1082 203 1077 202.6 1072.4 200.2 C1066 197 1060 192.4 1054.4 189.4 C1051 188.6 1047 189.6 1043.4 188.4 C1045.2 187.2 1046.6 186.4 1046 185.8 C1043.4 185.6 1040.6 185 1040 182.6 Z" fill="url(#ag)"/>
<path d="M1069.4 174.4 C1076 173.4 1084 174.4 1090 177.2" fill="none" stroke="#2e4a3a" stroke-width="0.9"/>
<circle cx="1088.6" cy="165.6" r="0.6" fill="#234"/>
<g fill="none" stroke="#2b2b2b" stroke-width="1.15" stroke-linecap="round">
<path d="M1105.7 215.2 H1093.6 V212.9 M1093.6 215.2 C1093.6 217.8 1088 217.8 1088 215.2 V213.1 M1088 215.2 H1084.2 V213 M1084.2 215.2 C1084.2 218.6 1074.8 218.6 1074.8 213.2"/>
<path d="M1070.4 213.4 C1070.4 215.6 1066.2 215.6 1066.2 213.8 V212.6"/>
<path d="M1061.8 214.6 C1062.2 212.2 1058.8 212 1059 214.2 C1059.2 215 1061 215.2 1061.8 214.6 C1061.6 216.4 1059.8 217.6 1057.6 217.6"/>
<path d="M1058.6 215.3 H1051.9 V211.8 L1058 208.6"/>
<path d="M1050.4 213.4 C1050.4 216.2 1049 217.6 1047.4 217.8"/>
</g>
<rect x="1090.3" y="216.6" width="1.3" height="1.3" fill="#2b2b2b"/>
<rect x="1067.2" y="216.8" width="1.3" height="1.3" fill="#2b2b2b"/>
</svg>

</body></html>
